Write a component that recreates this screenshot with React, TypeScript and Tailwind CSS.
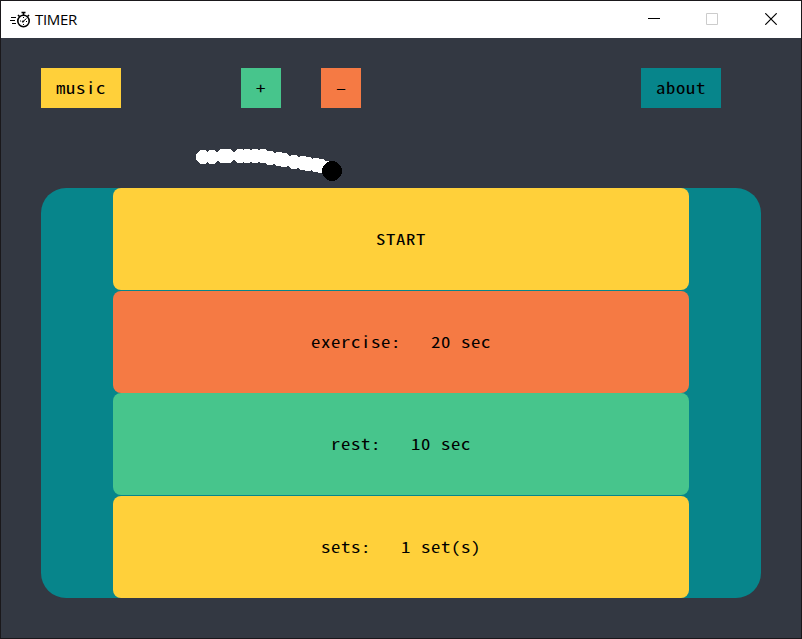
const TRAIL: [number, number][] = [
  [203, 157], [212, 157], [223, 156], [228, 156], [240, 156], [247, 156], [255, 156], [263, 156],
  [270, 158], [279, 159], [284, 160], [294, 162], [303, 163], [308, 164], [316, 165], [321, 166], [327, 168],
];

const MONO = "font-['Noto_Sans_Mono_CJK_SC','Noto_Sans_Mono_CJK_JP','DejaVu_Sans_Mono',monospace]";

function Stopwatch() {
  return (
    <svg width="22" height="18" viewBox="0 0 22 18" fill="none" stroke="#000" className="block">
      <path d="M2 6.5H7M1 9.5H6M3 12.5H7" strokeWidth="1" />
      <circle cx="14.5" cy="10" r="5.7" strokeWidth="1.6" />
      <path d="M12.5 1.5H16.5M14.5 1.5V4M9 4L10.5 5.5M20 4L18.5 5.5" strokeWidth="1.6" />
      <path d="M13.5 11L17.5 7.5M11 10H12M14.5 13V14M17 10.5H18M14.5 6V7" strokeWidth="1" />
      <circle cx="14" cy="10.5" r="0.8" fill="#000" strokeWidth="0.5" />
    </svg>
  );
}

function TitleBar() {
  return (
    <header className="flex h-[37px] shrink-0 items-center bg-white">
      <div className="ml-2 flex flex-1 items-center gap-1">
        <Stopwatch />
        <span className="pb-0.5 font-['Open_Sans',sans-serif] text-[15px] leading-5 tracking-[-0.3px] text-black">TIMER</span>
      </div>
      <div className="flex h-full pb-px">
        <button className="flex w-[58px] items-center justify-center" aria-label="Minimize">
          <svg width="12" height="12" viewBox="0 0 12 12" shapeRendering="crispEdges"><path d="M0 5.5H12" stroke="#000" /></svg>
        </button>
        <button className="flex w-[58px] items-center justify-center" aria-label="Maximize">
          <svg width="12" height="12" viewBox="0 0 12 12"><path d="M.5 .5H11.5V11.5H.5Z" fill="none" stroke="#ccc" /></svg>
        </button>
        <button className="mr-px flex w-[59px] items-center justify-center" aria-label="Close">
          <svg width="12" height="12" viewBox="0 0 12 12"><path d="M.3 .3L11.7 11.7M11.7 .3L.3 11.7" stroke="#000" strokeWidth="1.2" /></svg>
        </button>
      </div>
    </header>
  );
}

function Tile({ label, className }: { label: string; className: string }) {
  return (
    <button className={`flex items-center justify-center whitespace-pre ${className}`}>
      <span className="scale-x-125 tracking-[0.5px]">{label}</span>
    </button>
  );
}

export default function App() {
  return (
    <div className="relative flex h-[639px] w-[802px] flex-col overflow-hidden border border-[#1a181b] bg-[#333842]">
      <TitleBar />
      <main className={`flex flex-1 flex-col px-10 pt-[30px] text-[15px] leading-6 text-black ${MONO}`}>
        <nav className="flex h-10">
          <Tile label="music" className="w-20 bg-[#ffd03a]" />
          <Tile label="+" className="ml-[120px] w-10 bg-[#47c58c]" />
          <Tile label="–" className="ml-10 w-10 bg-[#f57a44]" />
          <Tile label="about" className="ml-[280px] w-20 bg-[#07858b]" />
        </nav>
        <section className="mt-20 flex h-[410px] w-[720px] flex-col rounded-[25px] bg-[#07858b] px-[72px]">
          <Tile label="START" className="h-[102px] rounded-[8px] bg-[#ffd03a]" />
          <Tile label="exercise:   20 sec" className="mt-px h-[102px] rounded-[8px] bg-[#f57a44]" />
          <Tile label="rest:   10 sec" className="h-[102px] rounded-[8px] bg-[#47c58c]" />
          <Tile label="sets:   1 set(s)" className="mt-px h-[102px] rounded-[8px] bg-[#ffd03a]" />
        </section>
      </main>
      <svg className="pointer-events-none absolute top-[139px] left-[189px]" width="170" height="48" viewBox="190 140 170 48" shapeRendering="crispEdges">
        {TRAIL.map(([x, y]) => (
          <circle key={x} cx={x} cy={y} r="7" fill="#fff" />
        ))}
        <circle cx="332" cy="171" r="10" fill="#000" />
      </svg>
    </div>
  );
}
